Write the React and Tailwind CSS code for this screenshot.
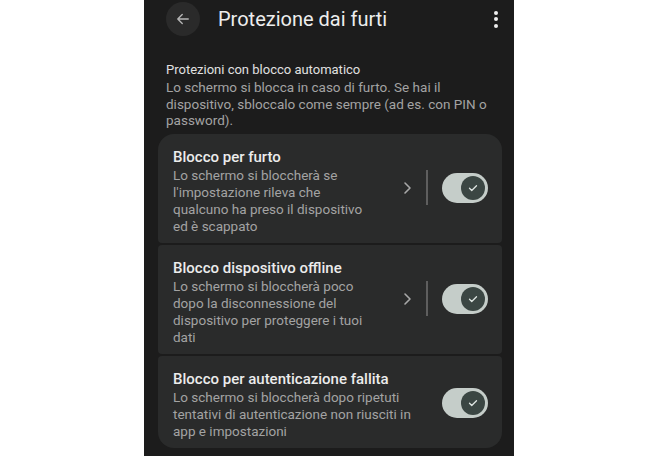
import React from "react";

function Toggle() {
  return (
    <div className="w-[46px] h-[30px] rounded-full bg-[#c5cdc9] flex items-center justify-end pr-[3px]">
      <div className="w-[24px] h-[24px] rounded-full bg-[#3b4643] flex items-center justify-center">
        <svg width="12" height="12" viewBox="0 0 24 24" fill="none" stroke="#dfe6e3" strokeWidth="2.6" strokeLinecap="round" strokeLinejoin="round">
          <path d="M5 12.5l4.5 4.5L19 7.5" />
        </svg>
      </div>
    </div>
  );
}

function Card({ title, lines, chevron, rounded }) {
  return (
    <div className={`bg-[#2a2b2b] ${rounded} flex items-center pl-[15px] pr-[14px] pt-[13px] pb-[8px]`}>
      <div className="flex-1 flex flex-col">
        <div className="text-[15px] leading-[20px] text-[#ececec] font-medium">{title}</div>
        <div className="text-[13.5px] leading-[17px] text-[#a3a3a3]">
          {lines.map((l, i) => (
            <div key={i} className="whitespace-nowrap">{l}</div>
          ))}
        </div>
      </div>
      {chevron ? (
        <div className="flex items-center mt-[-6px]">
          <svg width="10" height="14" viewBox="0 0 10 14" fill="none" stroke="#a8a8a8" strokeWidth="1.6" strokeLinecap="round" strokeLinejoin="round">
            <path d="M3 2l5 5-5 5" />
          </svg>
          <div className="w-[2px] h-[35px] bg-[#5e5e5e] ml-[14px] mr-[14px]" />
          <Toggle />
        </div>
      ) : (
        <div className="mt-[-2px]">
          <Toggle />
        </div>
      )}
    </div>
  );
}

export default function App() {
  return (
    <div className="w-[660px] h-[456px] bg-white pl-[144px] overflow-hidden" style={{ fontFamily: "Roboto, 'Open Sans', sans-serif" }}>
      <div className="w-[370px] h-[456px] bg-[#1c1c1c] flex flex-col">
        <div className="h-[38px] flex items-center pl-[22px] pr-[14px]">
          <div className="w-[34px] h-[34px] rounded-full bg-[#2a2a2a] flex items-center justify-center">
            <svg width="18" height="18" viewBox="0 0 24 24" fill="none" stroke="#b5b5b5" strokeWidth="1.8" strokeLinecap="round" strokeLinejoin="round">
              <path d="M19 12H5M11 6l-6 6 6 6" />
            </svg>
          </div>
          <div className="ml-[18px] text-[20px] text-[#ededed] flex-1">Protezione dai furti</div>
          <div className="flex flex-col gap-[2.5px] items-center mr-[2px]">
            <div className="w-[4px] h-[4px] rounded-full bg-[#eeeeee]" />
            <div className="w-[4px] h-[4px] rounded-full bg-[#eeeeee]" />
            <div className="w-[4px] h-[4px] rounded-full bg-[#eeeeee]" />
          </div>
        </div>
        <div className="pl-[22px] pt-[24px] flex flex-col">
          <div className="text-[13px] leading-[16px] text-[#e0e0e0]">Protezioni con blocco automatico</div>
          <div className="text-[13.5px] leading-[16.5px] text-[#a3a3a3] mt-[1px]">
            <div className="whitespace-nowrap">Lo schermo si blocca in caso di furto. Se hai il</div>
            <div className="whitespace-nowrap">dispositivo, sbloccalo come sempre (ad es. con PIN o</div>
            <div className="whitespace-nowrap">password).</div>
          </div>
        </div>
        <div className="ml-[14px] mr-[12px] mt-[5px] flex flex-col gap-[2px]">
          <Card
            rounded="rounded-t-[16px] rounded-b-[4px]"
            title="Blocco per furto"
            lines={["Lo schermo si bloccherà se", "l'impostazione rileva che", "qualcuno ha preso il dispositivo", "ed è scappato"]}
            chevron
          />
          <Card
            rounded="rounded-[4px]"
            title="Blocco dispositivo offline"
            lines={["Lo schermo si bloccherà poco", "dopo la disconnessione del", "dispositivo per proteggere i tuoi", "dati"]}
            chevron
          />
          <Card
            rounded="rounded-b-[16px] rounded-t-[4px]"
            title="Blocco per autenticazione fallita"
            lines={["Lo schermo si bloccherà dopo ripetuti", "tentativi di autenticazione non riusciti in", "app e impostazioni"]}
          />
        </div>
      </div>
    </div>
  );
}
